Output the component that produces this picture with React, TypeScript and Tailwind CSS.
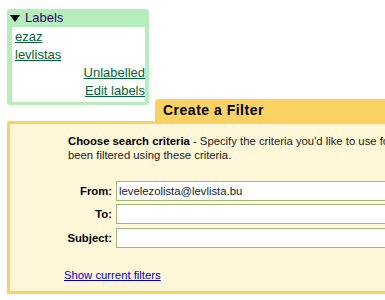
import React from "react";

export default function App() {
  return (
    <div
      className="w-[385px] h-[300px] overflow-hidden bg-white"
      style={{ fontFamily: '"Liberation Sans", Arial, sans-serif' }}
    >
      <div className="w-[800px]">
        {/* Labels box */}
        <div className="ml-[7px] mt-[9px] w-[142px] rounded-[3px] bg-[#b5edbc]">
          <div className="flex h-[18px] items-center pl-[3px] text-[13px] text-[#330066]">
            <svg width="10" height="7" viewBox="0 0 10 7" className="mr-[5px]">
              <polygon points="0,0 10,0 5,7" fill="#000" />
            </svg>
            <span>Labels</span>
          </div>
          <div className="ml-[5px] mr-[4px] pb-[2px] pt-[1px] bg-white text-[13px] leading-[18px]">
            <div className="pl-[3px]">
              <a href="#" className="text-[#006633] underline">ezaz</a>
            </div>
            <div className="pl-[3px]">
              <a href="#" className="text-[#006633] underline">levlistas</a>
            </div>
            <div className="text-right">
              <a href="#" className="text-[#006633] underline">Unlabelled</a>
            </div>
            <div className="text-right">
              <a href="#" className="text-[#006633] underline">Edit labels</a>
            </div>
          </div>
          <div className="h-[3px]" />
        </div>

        {/* Filter section */}
        <div className="mt-[-6px]">
          <div className="flex">
            <div className="w-[155px] shrink-0" />
            <div className="h-[22px] flex-1 rounded-tl-[3px] bg-[#fad163] pl-[8px] text-[14px] font-bold leading-[22px] tracking-[0.5px] text-black">
              Create a Filter
            </div>
          </div>
          <div className="ml-[7px] h-[173px] rounded-tl-[2px] border-[3px] border-[#fad163] bg-[#fff7d7] pt-[10px]">
            <div className="pl-[58px] text-[11.3px] leading-[14px] text-[#222] whitespace-nowrap">
              <span className="font-bold text-black">Choose search criteria</span> - Specify the criteria you'd like to use for determining what to do with a message. Click "Test Search" to see which messages would have
              <br />
              been filtered using these criteria.
            </div>
            <div className="mt-[19px] flex flex-col text-[11.3px]">
              <div className="flex h-[20px] items-center">
                <div className="w-[102px] text-right font-bold text-black">From:</div>
                <div className="ml-[4px] flex h-[20px] w-[500px] items-center border border-[#a0b878] bg-white pl-[2px] text-[#222]">
                  levelezolista@levlista.bu
                </div>
              </div>
              <div className="mt-[3px] flex h-[20px] items-center">
                <div className="w-[102px] text-right font-bold text-black">To:</div>
                <div className="ml-[4px] h-[20px] w-[500px] border border-[#a0b878] bg-white" />
              </div>
              <div className="mt-[4px] flex h-[20px] items-center">
                <div className="w-[102px] text-right font-bold text-black">Subject:</div>
                <div className="ml-[4px] h-[20px] w-[500px] border border-[#a0b878] bg-white" />
              </div>
            </div>
            <div className="mt-[20px] pl-[54px] text-[11.3px] leading-[14px]">
              <a href="#" className="text-[#0000cc] underline">Show current filters</a>
            </div>
          </div>
        </div>
      </div>
    </div>
  );
}
